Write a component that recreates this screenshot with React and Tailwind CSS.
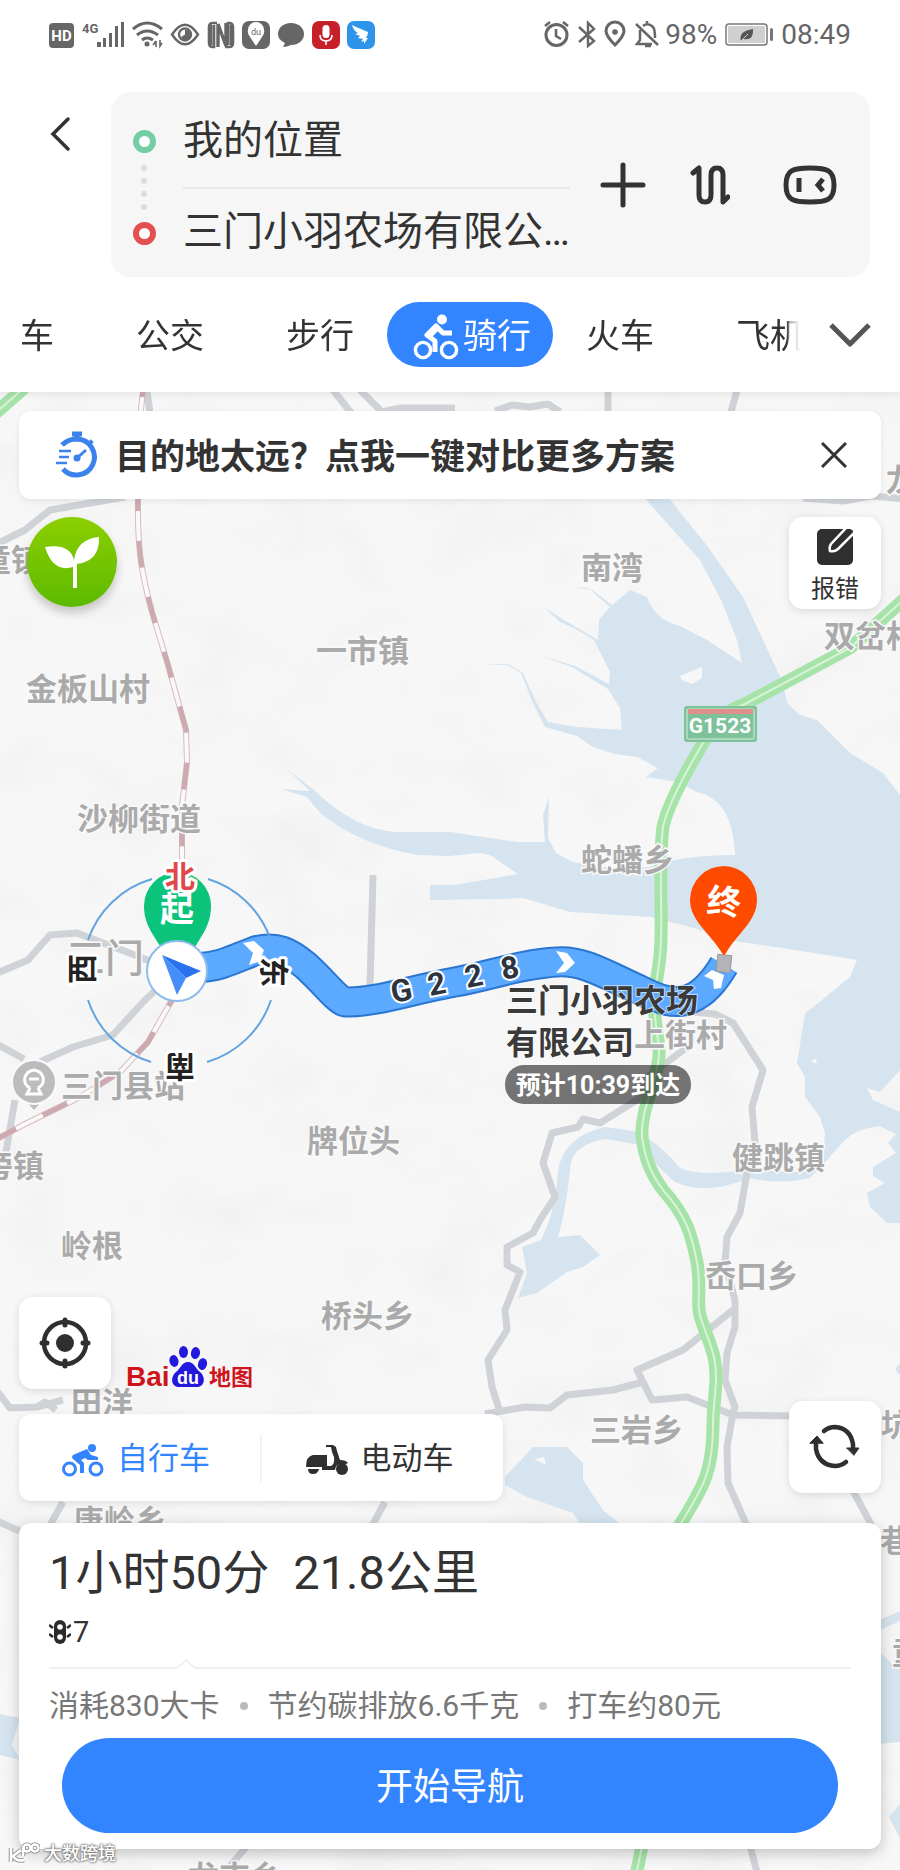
import React from "react";

const placeLabels = [
  ["南湾", 581, 568],
  ["一市镇", 316, 651],
  ["金板山村", 26, 689],
  ["沙柳街道", 77, 819],
  ["蛇蟠乡", 581, 860],
  ["双岔村", 824, 636],
  ["龙", 886, 480],
  ["童镇", -20, 560],
  ["三门县站", 61, 1086],
  ["旁镇", -18, 1166],
  ["牌位头", 307, 1141],
  ["岭根", 61, 1246],
  ["桥头乡", 321, 1316],
  ["田洋", 71, 1403],
  ["唐岭乡", 73, 1521],
  ["上街村", 634, 1035],
  ["健跳镇", 732, 1158],
  ["岙口乡", 705, 1276],
  ["三岩乡", 590, 1430],
  ["坑", 881, 1425],
  ["巷", 880, 1541],
  ["童", 892, 1653],
  ["龙吉乡", 188, 1877],
];

const RAIL_NORTH =
  "M143 390 L139 430 L138 498 C137 550 142 575 152 612 L168 665 L186 730 L187 762 L182 806 L182 860";
const RAIL_SOUTH = "M172 1000 L148 1042 L120 1072 L80 1097 L23 1125 L-5 1140";
const HIGHWAY =
  "M910 594 L850 648 L743 705 Q720 712 703 743 Q668 802 663 827 C660 850 661 873 661 900 C662 950 660 960 655 990 C652 1020 660 1040 659 1055 C658 1080 640 1110 642 1137 C645 1160 652 1175 663 1190 C690 1220 692 1240 697 1262 C702 1290 695 1305 702 1322 C712 1350 716 1355 716 1380 C715 1400 713 1410 713 1425 C713 1470 705 1485 678 1528";
const ROUTE =
  "M196 968 C222 967 238 957 255 951 C277 945 290 953 305 965 C325 983 338 1001 345 1002 C375 1003 410 990 455 982 C490 976 520 964 557 962 C585 960 610 977 640 990 C660 1000 675 1005 690 999 C705 993 715 980 724 965";

function Rail({ d }) {
  return (
    <g fill="none">
      <path d={d} stroke="#d9bcc0" strokeWidth="6" />
      <path d={d} stroke="#faf8f8" strokeWidth="4" />
      <path d={d} stroke="#cdaab0" strokeWidth="5" strokeDasharray="27 30" strokeDashoffset="20" />
    </g>
  );
}

function MapCanvas() {
  return (
    <svg
      className="absolute inset-0 h-full w-full"
      viewBox="0 392 900 1478"
      preserveAspectRatio="xMidYMin slice"
      role="img"
      aria-label="骑行路线地图"
    >
      <defs>
        <filter id="relief" x="0" y="0" width="100%" height="100%">
          <feTurbulence type="fractalNoise" baseFrequency="0.012 0.016" numOctaves="3" seed="7" />
          <feColorMatrix values="0 0 0 0 0.86  0 0 0 0 0.86  0 0 0 0 0.86  1.5 0 0 0 -0.68" />
        </filter>
      </defs>
      <rect x="0" y="392" width="900" height="1478" fill="#f7f7f7" />
      <rect x="0" y="392" width="900" height="1478" filter="url(#relief)" />

      <g fill="#d5e4ef">
        <path d="M640 493 L668 497 L708 547 L743 597 L763 640 L783 683 L787 703 L800 715 L817 720 L850 753 L883 773 L900 795 V1070 L880 1092 L867 1088 L873 1100 L900 1112 V1223 L887 1223 L870 1207 L867 1193 L885 1183 L873 1176 L873 1167 L896 1153 L888 1143 L896 1134 L880 1126 Q858 1128 845 1140 L825 1162 L823 1157 L825 1133 L820 1117 L805 1097 V1077 L797 1063 L805 1013 L822 1000 L850 977 L857 960 L783 948 L740 942 L690 927 L650 917 L570 912 L523 898 L500 899 L430 900 V885 L455 885 L518 874 L500 862 Q490 853 478 853 L450 856 L417 855 Q360 845 320 813 L307 797 L281 789 L310 791 L287 769 L314 790 Q355 830 397 832 L450 832 L517 842 L545 842 L543 815 L549 797 L548 838 L556 853 L573 862 Q610 871 650 867 Q680 855 735 855 Q733 800 697 792 L677 782 L646 777 L658 768 L637 757 L615 754 L593 747 L577 736 L545 727 L533 703 L521 673 L507 665 L480 665 L508 664 L523 673 L535 700 L548 722 L577 727 L622 730 L620 708 L608 689 L572 667 L538 655 L575 666 L609 684 L610 672 L594 640 L574 628 L560 622 L545 608 L564 620 L598 640 L599 620 L610 607 L588 588 L572 587 L592 590 L612 605 L630 590 L647 597 Q655 620 680 626 L707 640 L742 663 L737 640 L722 602 L700 560 L682 540 Z" />
        <path d="M522 1247 L541 1240 Q556 1210 558 1172 Q562 1137 605 1127 L632 1131 Q655 1138 680 1168 Q700 1177 745 1170 L800 1172 L830 1157 L810 1178 Q780 1185 750 1178 Q705 1196 675 1182 Q655 1165 640 1145 L605 1139 Q570 1145 570 1170 Q566 1210 558 1237 L580 1235 L600 1255 L583 1267 L567 1272 L537 1293 L518 1298 L527 1273 Z" />
        <path d="M505 1477 L533 1447 H567 L583 1463 V1480 L603 1510 L620 1524 H580 L573 1513 L527 1497 L505 1485 Z" />
        <path d="M880 1620 L900 1611 V1621 L880 1630 Z M880 1652 L893 1665 L900 1667 V1742 L880 1744 Z M889 1817 L900 1804 V1838 Z M0 1714 L20 1718 L12 1745 L20 1760 L0 1755 Z M896 1368 L900 1363 V1375 L896 1371 Z" />
      </g>
      <g fill="#f7f7f7">
        <path d="M680 676 L692 671 L702 667 L702 678 L692 684 L682 680 Z M534 1459 L544 1457 L546 1465 Z M811 1062 L815 1058 L817 1064 Z" />
      </g>

      <g fill="none" stroke="#cfd3d8" strokeWidth="7" strokeLinejoin="round">
        <path d="M-5 545 L25 530 L50 510 L125 497" />
        <path d="M333 390 L352 414 M360 390 L382 412 L400 408 H455 M495 411 L512 405 L530 407 L548 404 L560 412 M608 390 V414 M737 390 L731 412 M803 498 L843 501 L872 496 L905 499 M147 392 L150 412" />
        <path d="M-5 974 L28 960 L50 935 L77 933 L140 957 L175 972 L145 1000 L113 1035 L73 1047 L40 1062 M-5 1043 L24 1059 M15 1100 L6 1152 M200 980 L222 975" />
        <path d="M373 875 L370 985" />
        <path d="M693 1012 L715 1014 L733 1023 L763 1070 L752 1107 L755 1143 L747 1173 L740 1213 L727 1237 L725 1263 L735 1300 L735 1327 L727 1353 L725 1380 L735 1407 L733 1413 L727 1447 L728 1483 L747 1526" />
        <path d="M690 1045 L650 1075 L640 1098 L600 1123 L583 1119 L578 1127 L552 1133 L543 1163 L555 1197 L540 1220 L533 1233 L507 1247 V1265 L520 1272 L505 1310 L507 1330 L488 1360 L492 1387 L500 1412" />
        <path d="M485 1414 L525 1407 L550 1408 L567 1395 L613 1390 L643 1382 L637 1370 L683 1350 L733 1310 M643 1382 L652 1400 L687 1397 L733 1415 L795 1416 M853 1491 L872 1526" />
        <path d="M-3 1391 L10 1408 L37 1407 L63 1400 M37 1407 L45 1402 L56 1410 M63 1502 L50 1525 M-3 1521 L24 1533 M385 1502 L372 1526 M247 1846 L225 1872 M750 1846 L757 1872" />
      </g>

      <Rail d={RAIL_NORTH} />
      <Rail d={RAIL_SOUTH} />

      <g fill="none">
        <path d={HIGHWAY} stroke="#a6e3a9" strokeWidth="13" />
        <path d={HIGHWAY} stroke="#d9f3d6" strokeWidth="2" />
        <path d="M-8 416 L24 388 M643 1842 L636 1875" stroke="#a6e3a9" strokeWidth="13" />
        <path d="M-8 416 L24 388 M643 1842 L636 1875" stroke="#d9f3d6" strokeWidth="2" />
      </g>

      <g
        className="[font-family:'Noto_Sans_CJK_SC',sans-serif] text-[31px] font-bold"
        fill="#aaa"
        stroke="#f9f9f9"
        strokeWidth="3"
        paintOrder="stroke"
      >
        {placeLabels.map(([name, x, cy]) => (
          <text key={name + x} x={x} y={cy + 11}>
            {name}
          </text>
        ))}
        <text x="66" y="972" className="text-[39px] font-medium">三门</text>
      </g>

      <g>
        <path d="M34 1110 L25 1100 H43 Z" fill="#bcbcbc" />
        <circle cx="34" cy="1082" r="22" fill="#bcbcbc" stroke="#fafafa" strokeWidth="2" />
        <path d="M30 1088 Q23 1084 25 1077 Q27 1071 34 1070 Q41 1071 43 1077 Q45 1084 38 1088 M30 1088 L27 1094 H41 L38 1088 M29 1079 H39" fill="none" stroke="#fff" strokeWidth="3" />
      </g>

      <g>
        <rect x="684" y="706" width="73" height="36" rx="3" fill="#7dc29a" />
        <rect x="687" y="709" width="67" height="30" rx="1" fill="none" stroke="#d5eedd" />
        <rect x="688" y="709" width="65" height="5" fill="#e0908b" />
        <text x="720" y="733" textAnchor="middle" fill="#fff" className="[font-family:Roboto,sans-serif] text-[21px] font-bold">G1523</text>
      </g>

      <g fill="none" strokeLinejoin="round">
        <path d={ROUTE} stroke="#2b76d2" strokeWidth="31" />
        <path d={ROUTE} stroke="#5caaff" strokeWidth="27" />
      </g>
      <g fill="#fff">
        <path d="M243 943 L254 941 L264 950 L260 961 L249 965 L253 953 Z" />
        <path d="M556 951 L567 953 L575 963 L565 972 L556 973 L564 963 Z" />
        <path d="M704 976 L712 970 L724 975 L721 988 L714 989 L713 980 Z" />
      </g>
      <text
        x="393 430 467 503"
        y="1003 996 988 980"
        rotate="-11"
        fill="#2d3440"
        stroke="#fff"
        strokeWidth="4"
        paintOrder="stroke"
        className="[font-family:Roboto,sans-serif] text-[31px] font-bold"
      >
        G228
      </text>

      <g className="[font-family:'Noto_Sans_CJK_SC',sans-serif] text-[32px] font-bold" fill="#3a3a3a" stroke="#fff" strokeOpacity=".6" strokeWidth="2" paintOrder="stroke">
        <text x="506" y="1012">三门小羽农场</text>
        <text x="506" y="1054">有限公司</text>
      </g>
      <rect x="505" y="1065" width="186" height="39" rx="19" fill="#000" fillOpacity=".53" />
      <text x="598" y="1094" textAnchor="middle" fill="#fff" className="[font-family:Roboto,'Noto_Sans_CJK_SC',sans-serif] text-[25px] font-bold">预计10:39到达</text>

      <g fill="none" stroke="#62a3e0" strokeWidth="2">
        <path d="M88 940 A96 96 0 0 1 152 879 M208 879 A96 96 0 0 1 270 938 M271 1000 A96 96 0 0 1 207 1062 M151 1062 A96 96 0 0 1 88 1000" />
      </g>
      <path d="M178 872 A34 34 0 0 1 211 906 C211 930 196 940 188 962 L178 975 L168 962 C160 940 144 930 144 906 A34 34 0 0 1 178 872 Z" fill="#0cc37c" />
      <circle cx="177" cy="971" r="30" fill="#fff" stroke="#8dbcec" strokeWidth="2" />
      <path d="M162 955 L201 971 L186 978 Z" fill="#2a71ee" />
      <path d="M162 955 L186 978 L177 995 Z" fill="#458efa" />
      <g textAnchor="middle" className="[font-family:'Noto_Sans_CJK_SC',sans-serif] text-[30px] font-bold" fill="#222" stroke="#fff" strokeWidth="6" strokeLinejoin="round" paintOrder="stroke">
        <text x="177" y="921" fill="#fff" stroke="none" className="text-[34px]">起</text>
        <text x="180" y="887" fill="#e0484c">北</text>
        <text transform="translate(180 1067) rotate(180)" y="11">南</text>
        <text transform="translate(82 969) rotate(-90)" y="11">西</text>
        <text transform="translate(274 972) rotate(90)" y="11">东</text>
      </g>

      <rect x="717" y="955" width="14" height="17" fill="#b2b4b7" stroke="#999" transform="rotate(6 724 963)" />
      <path d="M724 866 A34 34 0 0 1 757 900 C757 921 737 934 726 953 Q724 957 722 953 C711 934 690 921 690 900 A34 34 0 0 1 724 866 Z" fill="#ff4b00" />
      <text transform="translate(724 901) rotate(5)" y="13" textAnchor="middle" fill="#fff" className="[font-family:'Noto_Sans_CJK_SC',sans-serif] text-[34px] font-bold">终</text>
    </svg>
  );
}

function StatusBar() {
  return (
    <div className="flex h-[70px] items-center justify-between pr-[49px] pl-[47px] text-[28px] text-[#666]">
      <div className="flex items-center">
        <svg width="32" height="32" viewBox="47 18 32 32" aria-hidden="true">
          <rect x="49" y="22" width="25" height="25" rx="4" fill="#666" />
          <text x="61.5" y="40" textAnchor="middle" fill="#fff" className="[font-family:Roboto,sans-serif] text-[15px] font-bold">HD</text>
        </svg>
        <svg width="50" height="32" viewBox="79 18 50 32" fill="#666" aria-hidden="true">
          <text x="82" y="32" className="[font-family:Roboto,sans-serif] text-[13px] font-bold">4G</text>
          <path d="M97 41h4v5h-4zM103 37h3v9h-3zM109 32h3v14h-3zM115 25h3v21h-3zM121 21h3v25h-3z" />
        </svg>
        <svg width="38" height="32" viewBox="129 18 38 32" fill="none" stroke="#666" strokeWidth="3" aria-hidden="true">
          <path d="M133 28Q147 16 162 28M137 34Q147 26 158 34M142 39Q147 35 153 39" />
          <circle cx="147" cy="43" r="2.5" fill="#666" stroke="none" />
          <path d="M156 40V46M156 40L153 44M160 39V45L162 42" strokeWidth="1.6" />
        </svg>
        <svg width="38" height="32" viewBox="167 18 38 32" fill="none" stroke="#666" strokeWidth="2.4" aria-hidden="true">
          <path d="M172 33.500Q185 14 198 33.500Q185 53 172 33.500Z" />
          <circle cx="185" cy="33.500" r="6" />
          <path d="M185 33.500V29A5 5 0 1 1 181 36Z" fill="#666" stroke="none" />
        </svg>
        <svg width="34" height="32" viewBox="205 18 34 32" fill="none" stroke="#666" aria-hidden="true">
          <path d="M217 22H213Q209 22 209 26V42Q209 46 213 46H214V24M225 46H229Q233 46 233 42V26Q233 22 229 22H228V44" strokeWidth="2.600" />
          <path d="M211 24V44M231 24V44" strokeWidth="3" />
          <path d="M218 46V23L226 45V22" strokeWidth="3.400" strokeLinejoin="bevel" />
        </svg>
        <svg width="36" height="32" viewBox="239 18 36 32" aria-hidden="true">
          <rect x="242" y="20" width="28" height="28" rx="7" fill="#666" />
          <path d="M256 45L250 36Q247 32 248 29A8 8 0 0 1 264 29Q265 32 262 36Z" fill="#fff" />
          <text x="256" y="34" textAnchor="middle" fill="#666" className="[font-family:Roboto,sans-serif] text-[9px]">du</text>
        </svg>
        <svg width="34" height="32" viewBox="275 18 34 32" fill="#666" aria-hidden="true">
          <path d="M291 22C299 22 304 27 304 33S299 44 291 44Q287 46 283 46L285 42Q278 39 278 33C278 27 283 22 291 22Z" />
        </svg>
        <svg width="34" height="32" viewBox="309 18 34 32" aria-hidden="true">
          <rect x="312" y="20" width="28" height="28" rx="7" fill="#c8202b" />
          <rect x="322.500" y="24" width="7" height="13" rx="3.500" fill="#fff" />
          <path d="M320 34Q320 40 326 40T332 34M326 40V44" fill="none" stroke="#fff" strokeWidth="1.6" />
        </svg>
        <svg width="34" height="32" viewBox="343 18 34 32" aria-hidden="true">
          <rect x="347" y="20" width="28" height="28" rx="7" fill="#2d94ea" />
          <path d="M352 24Q358 27 368 31Q368 34 366 37H368L364 43L364 40L361 41L363 38L358 37L360 35L355 33L358 32Q353 29 352 24Z" fill="#fff" />
        </svg>
      </div>
      <div className="flex items-center">
        <svg width="34" height="32" viewBox="541 18 34 32" fill="none" stroke="#666" strokeWidth="3" aria-hidden="true">
          <circle cx="556.500" cy="34" r="10.500" />
          <path d="M556 28V35L561 38M545 25L550 21M568 25L563 21" strokeWidth="2.600" />
        </svg>
        <svg width="25" height="32" viewBox="575 18 25 32" fill="none" stroke="#666" strokeWidth="2.400" aria-hidden="true">
          <path d="M579 26L594 40L588 45V22L594 28L579 41" />
        </svg>
        <svg width="32" height="32" viewBox="600 18 32 32" fill="none" stroke="#666" strokeWidth="3" aria-hidden="true">
          <path d="M615 44Q606 35 606 30A9 9 0 0 1 624 30Q624 35 615 44Z" />
          <circle cx="615" cy="31" r="2.800" fill="#666" stroke="none" />
        </svg>
        <svg width="33" height="32" viewBox="632 18 33 32" fill="none" stroke="#666" strokeWidth="2.500" aria-hidden="true">
          <path d="M636 23L658 44M640 29V39L637 43H652M643 25Q648 21 653 26Q655 28 655 37M647 22V20M645 45H651" />
        </svg>
        <span>98%</span>
        <svg width="64" height="32" viewBox="717 18 64 32" aria-hidden="true">
          <rect x="726" y="23" width="41" height="21" rx="3" fill="#fff" stroke="#777" strokeWidth="1.500" />
          <rect x="728" y="25" width="37" height="17" rx="1" fill="#cfcfcf" />
          <path d="M741 40Q738 30 753 28Q754 40 743 38Z" fill="#555" />
          <path d="M740 41L748 33" stroke="#cfcfcf" />
          <rect x="770" y="27" width="3" height="13" rx="1.500" fill="#777" />
        </svg>
        <span>08:49</span>
      </div>
    </div>
  );
}

function RiderIcon() {
  return (
    <svg width="46" height="46" viewBox="0 0 46 46" fill="none" stroke="currentColor" aria-hidden="true">
      <circle cx="10" cy="36" r="7.600" strokeWidth="3.400" />
      <circle cx="36" cy="36" r="7.600" strokeWidth="3.400" />
      <circle cx="29" cy="5.500" r="5" fill="currentColor" stroke="none" />
      <path d="M22 38V27L14 21L23 12L30 19H39" strokeWidth="5" strokeLinejoin="round" />
      <path d="M14 21L22 11L26 16L19 23Z" fill="currentColor" stroke="none" />
    </svg>
  );
}

function Tab({ children }) {
  return (
    <button type="button" className="h-[65px] w-[150px] shrink-0 pt-1">
      {children}
    </button>
  );
}

function Header() {
  return (
    <header className="relative z-10 bg-white shadow-[0_2px_8px_rgba(0,0,0,0.08)]">
      <StatusBar />
      <div className="flex items-start pt-[22px] pr-[30px]">
        <button type="button" aria-label="返回" className="flex h-[84px] w-[111px] shrink-0 items-center pl-[49px]">
          <svg width="24" height="36" viewBox="0 0 24 36" fill="none" stroke="#333" strokeWidth="3.500" strokeLinecap="round" aria-hidden="true">
            <path d="M19 3L4 18L19 33" />
          </svg>
        </button>
        <div className="flex min-w-0 flex-1 rounded-[20px] bg-[#f6f6f6] text-[#333]">
          <div className="flex w-[66px] shrink-0 flex-col items-center pt-[38px]" aria-hidden="true">
            <span className="size-[23px] rounded-full border-[6px] border-[#73cfa3] bg-white" />
            <span className="flex h-[69px] flex-col justify-center gap-[7px]">
              <i className="size-1.5 rounded-full bg-[#dcdcdc]" />
              <i className="size-1.5 rounded-full bg-[#dcdcdc]" />
              <i className="size-1.5 rounded-full bg-[#dcdcdc]" />
              <i className="size-1.5 rounded-full bg-[#dcdcdc]" />
            </span>
            <span className="size-[23px] rounded-full border-[6px] border-[#e45050] bg-white" />
          </div>
          <div className="min-w-0 flex-1 pl-1.5 text-[40px]">
            <input aria-label="起点" readOnly defaultValue="我的位置" className="block h-[95px] w-full bg-transparent pb-1.5 outline-none" />
            <div className="h-0.5 bg-[#e8e8e8]" />
            <input aria-label="终点" readOnly defaultValue="三门小羽农场有限公…" className="block h-[88px] w-full bg-transparent pb-2.5 outline-none" />
          </div>
          <div className="flex shrink-0 items-center pr-[33px] pl-[29px]">
            <button type="button" aria-label="添加途经点">
              <svg width="48" height="48" viewBox="0 0 48 48" stroke="#333" strokeWidth="5" strokeLinecap="round" aria-hidden="true">
                <path d="M24 4V44M4 24H44" />
              </svg>
            </button>
            <button type="button" aria-label="交换起终点" className="mr-[53px] ml-[43px]">
              <svg width="40" height="42" viewBox="0 0 40 42" fill="none" stroke="#333" strokeWidth="5" strokeLinecap="round" strokeLinejoin="round" aria-hidden="true">
                <path d="M3 9L9 4V31Q9 38 15 38T21 31V11Q21 4 27 4T33 11V38L38 33" />
              </svg>
            </button>
            <button type="button" aria-label="智能助手">
              <svg width="54" height="42" viewBox="0 0 54 42" fill="none" stroke="#333" aria-hidden="true">
                <path d="M27 4C44 4 51 6 51 21S44 38 27 38S3 36 3 21S10 4 27 4Z" strokeWidth="5" />
                <path d="M16 14V28" strokeWidth="5" />
                <path d="M40 15L35 21L40 27" strokeWidth="5" />
              </svg>
            </button>
          </div>
        </div>
      </div>
      <nav aria-label="出行方式" className="flex py-[25px] text-[34px] text-[#333]">
        <div className="flex min-w-0 flex-1 overflow-hidden [mask-image:linear-gradient(to_right,#000_calc(100%-14px),rgba(0,0,0,0.35)_calc(100%-11px),transparent)]">
          <button type="button" className="h-[65px] w-[95px] shrink-0 pt-1 pl-5 text-left">车</button>
          <Tab>公交</Tab>
          <Tab>步行</Tab>
          <button type="button" aria-current="page" className="-mx-2 flex h-[65px] w-[166px] shrink-0 items-center justify-center gap-1 rounded-full bg-[#3385ff] pt-1 pl-1 text-white">
            <RiderIcon />
            骑行
          </button>
          <Tab>火车</Tab>
          <Tab>飞机</Tab>
        </div>
        <button type="button" aria-label="展开更多" className="flex h-[65px] w-[99px] shrink-0 items-center justify-center pr-0.5">
          <svg width="42" height="28" viewBox="0 0 42 28" fill="none" stroke="#555" strokeWidth="5" strokeLinejoin="round" aria-hidden="true">
            <path d="M2 4L21 23L40 4" />
          </svg>
        </button>
      </nav>
    </header>
  );
}

function BaiduLogo() {
  return (
    <svg width="128" height="44" viewBox="126 1346 128 44" role="img" aria-label="Baidu 地图">
      <text x="127" y="1387" fill="#d0141c" className="[font-family:'Liberation_Sans',sans-serif] text-[28px] font-bold">Bai</text>
      <g fill="#2319dc">
        <ellipse cx="184.500" cy="1353" rx="4.500" ry="6" />
        <ellipse cx="196.500" cy="1354" rx="4.500" ry="6" transform="rotate(10 196 1354)" />
        <ellipse cx="175" cy="1362" rx="4.500" ry="6" transform="rotate(-12 175 1362)" />
        <ellipse cx="203.500" cy="1365" rx="4.500" ry="6" transform="rotate(12 203 1365)" />
        <path d="M189 1363C195 1363 196 1369 201 1373C207 1378 206 1388 198 1388H180C172 1388 171 1378 177 1373C182 1369 183 1363 189 1363Z" />
      </g>
      <text x="189" y="1385" textAnchor="middle" fill="#fff" className="[font-family:'Liberation_Sans',sans-serif] text-[18px] font-bold">du</text>
      <text x="210" y="1386" fill="#d0141c" className="[font-family:'Noto_Sans_CJK_SC',sans-serif] text-[22px] font-bold">地图</text>
    </svg>
  );
}

export default function App() {
  return (
    <div className="flex min-h-screen flex-col overflow-x-hidden bg-white [font-family:Roboto,'Noto_Sans_CJK_SC',sans-serif]">
      <Header />
      <main className="relative flex flex-1 flex-col overflow-hidden px-[19px] pt-[19px] pb-[21px]">
        <MapCanvas />

        <div className="relative flex h-[88px] items-center rounded-xl bg-white pr-[30px] pl-9 shadow-[0_2px_6px_rgba(0,0,0,0.08)]">
          <svg className="shrink-0" width="44" height="48" viewBox="0 0 44 48" fill="none" stroke="#3c82ec" aria-hidden="true">
            <path d="M7 14Q13 8 22 8A18 18 0 1 1 8 38" strokeWidth="5" />
            <path d="M17 3H27M22 3V9M34 10L37 13" strokeWidth="5" />
            <path d="M4 20H16M4 26H14M1 32H12" strokeWidth="2.500" />
            <path d="M22 27L31 19" strokeWidth="3" />
            <circle cx="22" cy="27" r="3.500" fill="#3c82ec" stroke="none" />
          </svg>
          <a href="#compare" className="ml-4 flex-1 pt-1.5 text-[35px] font-bold whitespace-nowrap text-[#333]">
            目的地太远？点我一键对比更多方案
          </a>
          <button type="button" aria-label="关闭" className="p-1">
            <svg width="26" height="26" viewBox="0 0 26 26" stroke="#333" strokeWidth="3" aria-hidden="true">
              <path d="M1 1L25 25M25 1L1 25" />
            </svg>
          </button>
        </div>

        <div className="relative mt-[18px] flex items-start justify-between pl-2">
          <button type="button" aria-label="绿色出行" className="flex size-[90px] items-center justify-center rounded-full bg-linear-to-b from-[#8bcf00] to-[#5cb900] shadow-[0_6px_10px_rgba(0,0,0,0.2)]">
            <svg width="56" height="54" viewBox="0 0 56 54" fill="#fff" aria-hidden="true">
              <path d="M1 12Q26 8 30 25Q33 4 55 2Q56 26 33 29V53H29V32Q9 38 1 12Z" />
            </svg>
          </button>
          <button type="button" className="flex size-[92px] flex-col items-center rounded-[14px] bg-white pt-3 text-2xl text-[#333] shadow-[0_2px_8px_rgba(0,0,0,0.12)]">
            <svg width="36" height="36" viewBox="0 0 36 36" aria-hidden="true">
              <rect width="36" height="36" rx="5" fill="#2f2f2f" />
              <path d="M30 -2L14 15Q12 18 13 22Q18 23 21 20L38 3" fill="#2f2f2f" stroke="#fff" strokeWidth="2.500" />
            </svg>
            <span className="mt-2">报错</span>
          </button>
        </div>

        <div className="relative mt-auto flex items-end justify-between pt-10">
          <div>
            <div className="flex items-end gap-3.5">
              <button type="button" aria-label="定位" className="flex size-[92px] items-center justify-center rounded-[14px] bg-white shadow-[0_2px_8px_rgba(0,0,0,0.12)]">
                <svg width="52" height="52" viewBox="0 0 52 52" fill="none" stroke="#2f2f2f" strokeLinecap="round" aria-hidden="true">
                  <circle cx="26" cy="26" r="21" strokeWidth="4.500" />
                  <circle cx="26" cy="26" r="9" fill="#2f2f2f" stroke="none" />
                  <path d="M26 3V8M26 44V49M3 26H8M44 26H49" strokeWidth="5" />
                </svg>
              </button>
              <BaiduLogo />
            </div>
            <div className="mt-[25px] flex h-[87px] w-[484px] items-center rounded-xl bg-white text-[31px] shadow-[0_2px_8px_rgba(0,0,0,0.1)]">
              <button type="button" aria-pressed="true" className="flex h-12 flex-1 items-center gap-3 border-r-2 border-[#f3f3f3] pt-1 pl-[42px] text-[#3385ff]">
                <svg width="44" height="34" viewBox="0 0 44 34" fill="none" stroke="currentColor" aria-hidden="true">
                  <circle cx="8.500" cy="26" r="6" strokeWidth="3" />
                  <circle cx="35" cy="26" r="6" strokeWidth="3" />
                  <circle cx="31" cy="5" r="4" fill="currentColor" stroke="none" />
                  <path d="M12 12L26 6L30 12L37 14V17H27L24 15L20 17L23 20V30H19V22L12 16Q10 14 12 12Z" fill="currentColor" stroke="none" />
                </svg>
                自行车
              </button>
              <button type="button" aria-pressed="false" className="flex h-12 flex-1 items-center gap-3 pt-1 pl-[43px] text-[#333]">
                <svg width="44" height="34" viewBox="0 0 44 34" fill="#2f2f2f" aria-hidden="true">
                  <path d="M1 24Q1 13 8 12H22V23H26Q30 21 29 14L27 9L26 4H21V2H28L31 4L32 8L35 17Q41 17 43 20L39 22Q31 19 30 27H17V24Z" />
                  <path d="M3 26H14Q13 31 8 31T3 26Z" />
                  <circle cx="37" cy="26" r="6" />
                </svg>
                电动车
              </button>
            </div>
          </div>
          <button type="button" aria-label="刷新" className="mb-2 flex size-[92px] items-center justify-center rounded-[14px] bg-white shadow-[0_2px_8px_rgba(0,0,0,0.12)]">
            <svg width="52" height="46" viewBox="0 0 52 46" fill="none" stroke="#2f2f2f" strokeWidth="4.500" strokeLinecap="round" aria-hidden="true">
              <path d="M15 7Q20 3 26 3Q41 4 44 20V24M37 38Q32 42 26 42Q10 41 7 25V20" />
              <path d="M38 24H50L45 31ZM1 19L8 12L14 19Z" fill="#2f2f2f" stroke="#2f2f2f" strokeWidth="1" />
            </svg>
          </button>
        </div>

        <section aria-label="路线详情" className="relative mt-[22px] rounded-xl bg-white px-[30px] pt-[22px] pb-4 text-[#333] shadow-[0_4px_14px_rgba(0,0,0,0.22)]">
          <h1 className="flex gap-6 text-[47px] leading-[56px]">
            <span>1小时50分</span>
            <span>21.8公里</span>
          </h1>
          <div className="mt-[15px] flex h-8 items-center gap-0.5 text-[29px] leading-8">
            <svg width="22" height="24" viewBox="0 0 22 24" fill="none" stroke="#2a2a2a" role="img" aria-label="红绿灯">
              <rect x="5" y="0" width="12" height="24" rx="6" fill="#2a2a2a" stroke="none" />
              <circle cx="11" cy="7" r="2.800" fill="#fff" stroke="none" />
              <circle cx="11" cy="17" r="2.800" fill="#fff" stroke="none" />
              <path d="M0 5L4 8M0 14L4 17M22 5L18 8M22 14L18 17" strokeWidth="2.500" />
            </svg>
            <span>7</span>
          </div>
          <div className="relative mt-[19px] h-0.5 bg-[#efefef]">
            <svg className="absolute -top-2 left-32" width="18" height="10" viewBox="0 0 18 10" fill="#fff" stroke="#efefef" strokeWidth="1.500" aria-hidden="true">
              <path d="M0 9L9 1L18 9V12H0Z" />
            </svg>
          </div>
          <div className="mt-[17px] flex h-10 items-center gap-5 text-[30px] leading-10 whitespace-nowrap text-[#777]">
            <span>消耗830大卡</span>
            <i className="size-2 rounded-full bg-[#bbb]" />
            <span>节约碳排放6.6千克</span>
            <i className="size-2 rounded-full bg-[#bbb]" />
            <span>打车约80元</span>
          </div>
          <div className="mt-3 px-[13px]">
            <button type="button" className="h-[95px] w-full rounded-full bg-[#3385ff] pt-1 text-[37px] text-white">开始导航</button>
          </div>
        </section>

        <div className="absolute bottom-1 left-2 flex items-center gap-1 text-lg leading-6 font-medium text-white [text-shadow:0_0_2px_#777,0_0_2px_#777,0_0_3px_#777]">
          <svg width="32" height="24" viewBox="0 0 32 24" fill="none" aria-hidden="true">
            <g stroke="#999" strokeWidth="4.500">
              <path d="M3 6V20M13 8L5 14Q9 20 16 18M15 14V4" />
              <circle cx="19" cy="6" r="3.500" />
              <circle cx="27" cy="6" r="3.500" />
            </g>
            <g stroke="#fff" strokeWidth="2.500">
              <path d="M3 6V20M13 8L5 14Q9 20 16 18M15 14V4" />
              <circle cx="19" cy="6" r="3.500" />
              <circle cx="27" cy="6" r="3.500" />
            </g>
          </svg>
          大数跨境
        </div>
      </main>
    </div>
  );
}
